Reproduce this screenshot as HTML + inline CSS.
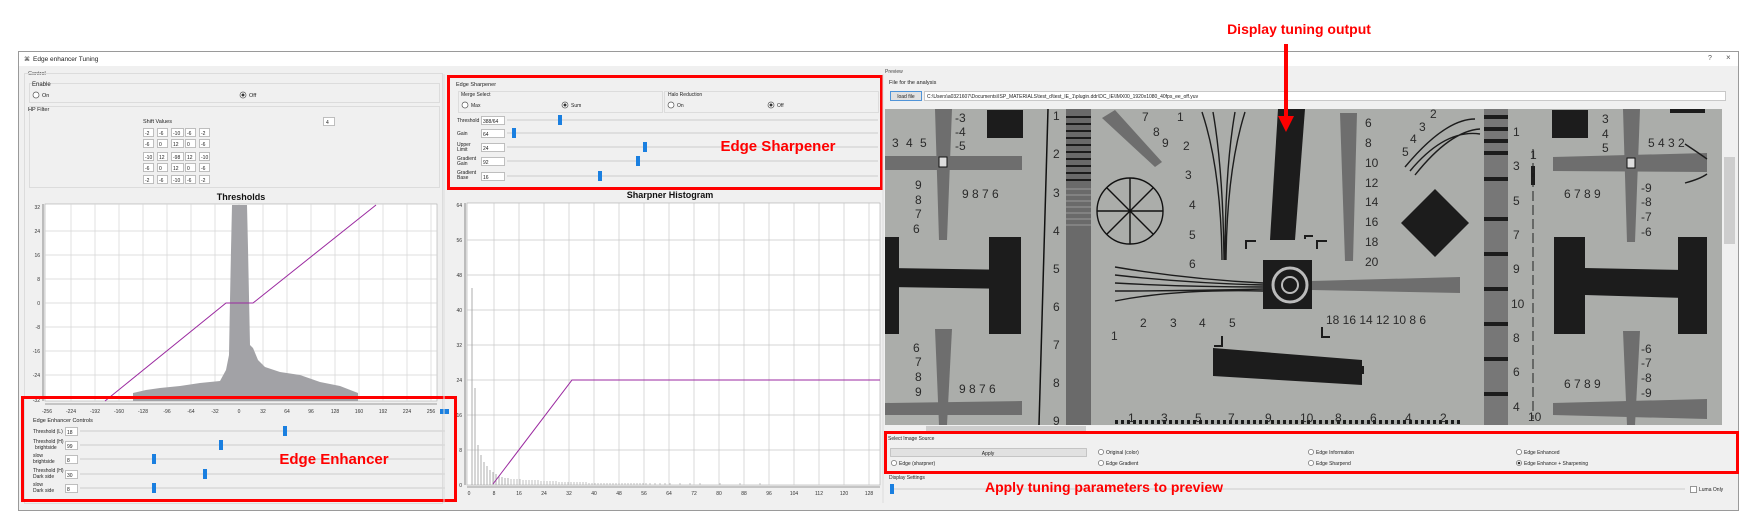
<!DOCTYPE html>
<html><head><meta charset="utf-8"><style>
html,body{margin:0;padding:0;background:#fff;}
svg{display:block;font-family:"Liberation Sans",sans-serif;}
</style></head><body>
<svg width="1758" height="527" viewBox="0 0 1758 527" xmlns="http://www.w3.org/2000/svg">
<rect width="1758" height="527" fill="#fff"/>
<!-- window -->
<rect x="18.5" y="51.5" width="1720" height="459" fill="#f0f0f0" stroke="#9a9a9a"/>
<rect x="19" y="52" width="1719" height="14" fill="#fff"/>
<text x="24" y="61" font-size="6" fill="#333">⌘</text>
<text x="33" y="61" font-size="6.5" fill="#222">Edge enhancer Tuning</text>
<text x="1708" y="60" font-size="7" fill="#555">?</text>
<text x="1726" y="60" font-size="8" fill="#555">×</text>

<!-- Control group -->
<text x="28" y="75" font-size="5.5" fill="#444">Control</text>
<rect x="24.5" y="73.5" width="418" height="430" fill="none" stroke="#dcdcdc"/>
<rect x="29.5" y="83.5" width="410" height="19" fill="none" stroke="#dcdcdc"/>
<text x="32" y="86" font-size="6" fill="#222">Enable</text>
<circle cx="36" cy="95" r="3" fill="#fff" stroke="#555" stroke-width="0.7"/>
<text x="42" y="97" font-size="5.5" fill="#222">On</text>
<circle cx="243" cy="95" r="3" fill="#fff" stroke="#555" stroke-width="0.7"/><circle cx="243" cy="95" r="1.5" fill="#333"/>
<text x="249" y="97" font-size="5.5" fill="#222">Off</text>
<rect x="29.5" y="106.5" width="410" height="81" fill="none" stroke="#dcdcdc"/>
<text x="28" y="111" font-size="5.5" fill="#222">HP Filter</text>
<text x="143" y="123" font-size="5.5" fill="#222">Shift Values</text>
<rect x="323.5" y="117.5" width="11" height="8" fill="#fff" stroke="#999" stroke-width="0.6"/>
<text x="326" y="124" font-size="5" fill="#222">4</text>
<g font-size="5" fill="#222">
<g stroke="#999" stroke-width="0.6" fill="#fff">
<rect x="143.5" y="128.5" width="10" height="8"/><rect x="157.5" y="128.5" width="10" height="8"/><rect x="171.5" y="128.5" width="12" height="8"/><rect x="185.5" y="128.5" width="10" height="8"/><rect x="199.5" y="128.5" width="10" height="8"/>
<rect x="143.5" y="139.5" width="10" height="8"/><rect x="157.5" y="139.5" width="10" height="8"/><rect x="171.5" y="139.5" width="12" height="8"/><rect x="185.5" y="139.5" width="10" height="8"/><rect x="199.5" y="139.5" width="10" height="8"/>
<rect x="143.5" y="152.5" width="10" height="8"/><rect x="157.5" y="152.5" width="10" height="8"/><rect x="171.5" y="152.5" width="12" height="8"/><rect x="185.5" y="152.5" width="10" height="8"/><rect x="199.5" y="152.5" width="10" height="8"/>
<rect x="143.5" y="163.5" width="10" height="8"/><rect x="157.5" y="163.5" width="10" height="8"/><rect x="171.5" y="163.5" width="12" height="8"/><rect x="185.5" y="163.5" width="10" height="8"/><rect x="199.5" y="163.5" width="10" height="8"/>
<rect x="143.5" y="175.5" width="10" height="8"/><rect x="157.5" y="175.5" width="10" height="8"/><rect x="171.5" y="175.5" width="12" height="8"/><rect x="185.5" y="175.5" width="10" height="8"/><rect x="199.5" y="175.5" width="10" height="8"/>
</g>
<text x="145" y="135">-2</text><text x="159" y="135">-6</text><text x="173" y="135">-10</text><text x="187" y="135">-6</text><text x="201" y="135">-2</text>
<text x="145" y="146">-6</text><text x="159" y="146">0</text><text x="173" y="146">12</text><text x="187" y="146">0</text><text x="201" y="146">-6</text>
<text x="145" y="159">-10</text><text x="159" y="159">12</text><text x="173" y="159">-98</text><text x="187" y="159">12</text><text x="201" y="159">-10</text>
<text x="145" y="170">-6</text><text x="159" y="170">0</text><text x="173" y="170">12</text><text x="187" y="170">0</text><text x="201" y="170">-6</text>
<text x="145" y="182">-2</text><text x="159" y="182">-6</text><text x="173" y="182">-10</text><text x="187" y="182">-6</text><text x="201" y="182">-2</text>
</g>

<!-- Thresholds chart -->
<text x="241" y="200" font-size="9" font-weight="bold" text-anchor="middle" fill="#111">Thresholds</text>
<rect x="45" y="204" width="392" height="197" fill="#fff" stroke="#aaa" stroke-width="0.6"/>
<g stroke="#d4d4d4" stroke-width="0.7">
<line x1="71" y1="204" x2="71" y2="401"/><line x1="95" y1="204" x2="95" y2="401"/><line x1="119" y1="204" x2="119" y2="401"/><line x1="143" y1="204" x2="143" y2="401"/><line x1="167" y1="204" x2="167" y2="401"/><line x1="191" y1="204" x2="191" y2="401"/><line x1="215" y1="204" x2="215" y2="401"/><line x1="239" y1="204" x2="239" y2="401"/><line x1="263" y1="204" x2="263" y2="401"/><line x1="287" y1="204" x2="287" y2="401"/><line x1="311" y1="204" x2="311" y2="401"/><line x1="335" y1="204" x2="335" y2="401"/><line x1="359" y1="204" x2="359" y2="401"/><line x1="383" y1="204" x2="383" y2="401"/><line x1="407" y1="204" x2="407" y2="401"/><line x1="431" y1="204" x2="431" y2="401"/>
<line x1="45" y1="231" x2="437" y2="231"/><line x1="45" y1="255" x2="437" y2="255"/><line x1="45" y1="279" x2="437" y2="279"/><line x1="45" y1="303" x2="437" y2="303"/><line x1="45" y1="327" x2="437" y2="327"/><line x1="45" y1="351" x2="437" y2="351"/><line x1="45" y1="375" x2="437" y2="375"/>
</g>
<polygon fill="#a2a2a6" points="133,401 133,393 146,390 160,388 180,386 200,383 220,381 226,370 229,355 230,300 231,250 232,205 247,205 248,248 250,345 253,348 258,360 265,367 280,372 300,375 320,382 340,386 358,393 358,401"/>
<polyline fill="none" stroke="#9b2aa0" stroke-width="1" points="105,401 226,303 253,303 376,205"/>
<g font-size="5" fill="#333" text-anchor="end">
<text x="40" y="209">32</text><text x="40" y="233">24</text><text x="40" y="257">16</text><text x="40" y="281">8</text><text x="40" y="305">0</text><text x="40" y="329">-8</text><text x="40" y="353">-16</text><text x="40" y="377">-24</text><text x="40" y="402">-32</text>
</g>
<line x1="43" y1="204" x2="43" y2="401" stroke="#444" stroke-width="0.6"/>
<line x1="45" y1="404" x2="437" y2="404" stroke="#444" stroke-width="0.6"/>
<g font-size="5" fill="#333" text-anchor="middle">
<text x="47" y="413">-256</text><text x="71" y="413">-224</text><text x="95" y="413">-192</text><text x="119" y="413">-160</text><text x="143" y="413">-128</text><text x="167" y="413">-96</text><text x="191" y="413">-64</text><text x="215" y="413">-32</text><text x="239" y="413">0</text><text x="263" y="413">32</text><text x="287" y="413">64</text><text x="311" y="413">96</text><text x="335" y="413">128</text><text x="359" y="413">160</text><text x="383" y="413">192</text><text x="407" y="413">224</text><text x="431" y="413">256</text>
</g>
<rect x="440" y="409" width="9" height="5" fill="#1a7fe0"/>

<!-- Edge enhancer controls -->
<text x="33" y="422" font-size="5.5" fill="#222">Edge Enhancer Controls</text>
<g font-size="5" fill="#222">
<text x="33" y="433">Threshold (L)</text>
<text x="33" y="443">Threshold (H)</text><text x="35" y="449">brightside</text>
<text x="33" y="457">slow</text><text x="33" y="463">brightside</text>
<text x="33" y="472">Threshold (H)</text><text x="33" y="478">Dark side</text>
<text x="33" y="486">slow</text><text x="33" y="492">Dark side</text>
</g>
<g fill="#fff" stroke="#999" stroke-width="0.6">
<rect x="65.5" y="427.5" width="12" height="8"/><rect x="65.5" y="441.5" width="12" height="8"/><rect x="65.5" y="455.5" width="12" height="8"/><rect x="65.5" y="470.5" width="12" height="8"/><rect x="65.5" y="484.5" width="12" height="8"/>
</g>
<g font-size="5" fill="#222"><text x="67" y="434">18</text><text x="67" y="448">99</text><text x="67" y="462">8</text><text x="67" y="477">30</text><text x="67" y="491">8</text></g>
<g stroke="#d8d8d8" stroke-width="1.5">
<line x1="80" y1="431" x2="445" y2="431"/><line x1="80" y1="445" x2="445" y2="445"/><line x1="80" y1="459" x2="445" y2="459"/><line x1="80" y1="474" x2="445" y2="474"/><line x1="80" y1="488" x2="445" y2="488"/>
</g>
<g fill="#1a7fe0">
<rect x="283" y="426" width="4" height="10"/><rect x="219" y="440" width="4" height="10"/><rect x="152" y="454" width="4" height="10"/><rect x="203" y="469" width="4" height="10"/><rect x="152" y="483" width="4" height="10"/>
</g>
<rect x="22.5" y="397.5" width="433" height="103" fill="none" stroke="#f00" stroke-width="3"/>
<text x="334" y="464" font-size="15" font-weight="bold" fill="#f00" text-anchor="middle">Edge Enhancer</text>

<!-- middle panel -->
<line x1="444" y1="74" x2="444" y2="503" stroke="#dcdcdc"/>
<text x="456" y="86" font-size="5.5" fill="#222">Edge Sharpener</text>
<rect x="458.5" y="91.5" width="204" height="21" fill="none" stroke="#dcdcdc"/>
<text x="461" y="96" font-size="5" fill="#222">Merge Select</text>
<circle cx="465" cy="105" r="3" fill="#fff" stroke="#555" stroke-width="0.7"/><text x="471" y="107" font-size="5" fill="#222">Max</text>
<circle cx="565" cy="105" r="3" fill="#fff" stroke="#555" stroke-width="0.7"/><circle cx="565" cy="105" r="1.5" fill="#333"/><text x="571" y="107" font-size="5" fill="#222">Sum</text>
<rect x="664.5" y="91.5" width="214" height="21" fill="none" stroke="#dcdcdc"/>
<text x="668" y="96" font-size="5" fill="#222">Halo Reduction</text>
<circle cx="671" cy="105" r="3" fill="#fff" stroke="#555" stroke-width="0.7"/><text x="677" y="107" font-size="5" fill="#222">On</text>
<circle cx="771" cy="105" r="3" fill="#fff" stroke="#555" stroke-width="0.7"/><circle cx="771" cy="105" r="1.5" fill="#333"/><text x="777" y="107" font-size="5" fill="#222">Off</text>
<g font-size="5" fill="#222">
<text x="457" y="122">Threshold</text>
<text x="457" y="135">Gain</text>
<text x="457" y="146">Upper</text><text x="457" y="151">Limit</text>
<text x="457" y="160">Gradient</text><text x="457" y="165">Gain</text>
<text x="457" y="174">Gradient</text><text x="457" y="179">Base</text>
</g>
<g fill="#fff" stroke="#999" stroke-width="0.6">
<rect x="481.5" y="116.5" width="23" height="8"/><rect x="481.5" y="129.5" width="23" height="8"/><rect x="481.5" y="143.5" width="23" height="8"/><rect x="481.5" y="157.5" width="23" height="8"/><rect x="481.5" y="172.5" width="23" height="8"/>
</g>
<g font-size="5" fill="#222"><text x="483" y="123">388/64</text><text x="483" y="136">64</text><text x="483" y="150">24</text><text x="483" y="164">92</text><text x="483" y="179">16</text></g>
<g stroke="#d8d8d8" stroke-width="1.5">
<line x1="507" y1="120" x2="878" y2="120"/><line x1="507" y1="133" x2="878" y2="133"/><line x1="507" y1="147" x2="878" y2="147"/><line x1="507" y1="161" x2="878" y2="161"/><line x1="507" y1="176" x2="878" y2="176"/>
</g>
<g fill="#1a7fe0">
<rect x="558" y="115" width="4" height="10"/><rect x="512" y="128" width="4" height="10"/><rect x="643" y="142" width="4" height="10"/><rect x="636" y="156" width="4" height="10"/><rect x="598" y="171" width="4" height="10"/>
</g>
<rect x="448.5" y="76.5" width="433" height="112" fill="none" stroke="#f00" stroke-width="3"/>
<text x="778" y="151" font-size="15" font-weight="bold" fill="#f00" text-anchor="middle">Edge Sharpener</text>

<!-- Sharpner histogram -->
<text x="670" y="198" font-size="9" font-weight="bold" text-anchor="middle" fill="#111">Sharpner Histogram</text>
<rect x="467" y="203" width="413" height="282" fill="#fff" stroke="#aaa" stroke-width="0.6"/>
<g stroke="#c8c8c8" stroke-width="0.7">
<line x1="494" y1="203" x2="494" y2="485"/><line x1="519" y1="203" x2="519" y2="485"/><line x1="544" y1="203" x2="544" y2="485"/><line x1="569" y1="203" x2="569" y2="485"/><line x1="594" y1="203" x2="594" y2="485"/><line x1="619" y1="203" x2="619" y2="485"/><line x1="644" y1="203" x2="644" y2="485"/><line x1="669" y1="203" x2="669" y2="485"/><line x1="694" y1="203" x2="694" y2="485"/><line x1="719" y1="203" x2="719" y2="485"/><line x1="744" y1="203" x2="744" y2="485"/><line x1="769" y1="203" x2="769" y2="485"/><line x1="794" y1="203" x2="794" y2="485"/><line x1="819" y1="203" x2="819" y2="485"/><line x1="844" y1="203" x2="844" y2="485"/><line x1="869" y1="203" x2="869" y2="485"/>
<line x1="467" y1="240" x2="880" y2="240"/><line x1="467" y1="275" x2="880" y2="275"/><line x1="467" y1="310" x2="880" y2="310"/><line x1="467" y1="345" x2="880" y2="345"/><line x1="467" y1="380" x2="880" y2="380"/><line x1="467" y1="415" x2="880" y2="415"/><line x1="467" y1="450" x2="880" y2="450"/>
</g>
<g stroke="#9a9a9a" stroke-width="0.8">
<line x1="472" y1="485" x2="472" y2="288"/><line x1="475" y1="485" x2="475" y2="388"/><line x1="478" y1="485" x2="478" y2="445"/><line x1="481" y1="485" x2="481" y2="455"/><line x1="484" y1="485" x2="484" y2="462"/><line x1="487" y1="485" x2="487" y2="466"/><line x1="490" y1="485" x2="490" y2="470"/><line x1="493" y1="485" x2="493" y2="472"/><line x1="496" y1="485" x2="496" y2="474"/><line x1="499" y1="485" x2="499" y2="476"/><line x1="502" y1="485" x2="502" y2="477"/><line x1="505" y1="485" x2="505" y2="478"/><line x1="508" y1="485" x2="508" y2="478"/>
</g>
<path d="M511 485v-6M514 485v-6M517 485v-6M520 485v-6M523 485v-5M526 485v-5M529 485v-5M532 485v-5M535 485v-5M538 485v-5M541 485v-4M544 485v-4M547 485v-4M550 485v-4M553 485v-4M556 485v-4M559 485v-3M562 485v-3M565 485v-3M568 485v-3M571 485v-3M574 485v-3M577 485v-3M580 485v-3M583 485v-3M586 485v-3M589 485v-2M592 485v-2M595 485v-2M598 485v-2M601 485v-2M604 485v-2M607 485v-2M610 485v-2M613 485v-2M616 485v-2M619 485v-2M622 485v-2M625 485v-2M628 485v-2M631 485v-2M634 485v-2M637 485v-2M640 485v-2M643 485v-2M646 485v-2M650 485v-2M655 485v-2M660 485v-2M665 485v-2M670 485v-2M680 485v-2M690 485v-2M700 485v-2M720 485v-2M740 485v-2M760 485v-2" stroke="#b0b0b0" stroke-width="0.8"/>
<polyline fill="none" stroke="#9b2aa0" stroke-width="1" points="493,484 572,380 880,380"/>
<line x1="465" y1="203" x2="465" y2="485" stroke="#444" stroke-width="0.6"/>
<line x1="467" y1="487" x2="880" y2="487" stroke="#444" stroke-width="0.6"/>
<g font-size="5" fill="#333" text-anchor="end">
<text x="462" y="207">64</text><text x="462" y="242">56</text><text x="462" y="277">48</text><text x="462" y="312">40</text><text x="462" y="347">32</text><text x="462" y="382">24</text><text x="462" y="417">16</text><text x="462" y="452">8</text><text x="462" y="487">0</text>
</g>
<g font-size="5" fill="#333" text-anchor="middle">
<text x="469" y="495">0</text><text x="494" y="495">8</text><text x="519" y="495">16</text><text x="544" y="495">24</text><text x="569" y="495">32</text><text x="594" y="495">40</text><text x="619" y="495">48</text><text x="644" y="495">56</text><text x="669" y="495">64</text><text x="694" y="495">72</text><text x="719" y="495">80</text><text x="744" y="495">88</text><text x="769" y="495">96</text><text x="794" y="495">104</text><text x="819" y="495">112</text><text x="844" y="495">120</text><text x="869" y="495">128</text>
</g>

<!-- Preview panel -->
<line x1="883" y1="74" x2="883" y2="503" stroke="#dcdcdc"/>
<text x="885" y="73" font-size="5" fill="#444">Preview</text>
<text x="889" y="84" font-size="5.5" fill="#222">File for the analysis</text>
<rect x="890.5" y="91.5" width="31" height="9" fill="#e1e1e1" stroke="#2a7fd4" stroke-width="0.8"/>
<text x="906" y="98" font-size="5" fill="#222" text-anchor="middle">load file</text>
<rect x="924.5" y="91.5" width="801" height="9" fill="#fff" stroke="#aaa" stroke-width="0.6"/>
<text x="927" y="98" font-size="5" fill="#222">C:\Users\a0321607\Documents\ISP_MATERIALS\test_d\test_IE_1\plugin.ddr\DC_IE\IMX00_1920x1080_40fps_ee_off.yuv</text>

<!-- test chart image -->
<svg x="885" y="109" width="837" height="316" viewBox="0 0 837 316">
<rect width="837" height="316" fill="#abadaa"/>
<g fill="#1c1c1c">
<!-- left column -->
<rect x="102" y="1" width="36" height="28"/>
<rect x="0" y="128" width="14" height="97"/>
<polygon points="0,159 135,161 135,180 0,178"/>
<rect x="104" y="128" width="32" height="97"/>
<!-- tall bar -->
<polygon points="393,0 420,0 410,131 385,131"/>
<!-- target -->
<rect x="378" y="151" width="49" height="49"/>
<!-- bottom bar -->
<polygon points="328,239 477,251 477,276 328,267"/>
<!-- diamond -->
<polygon points="550,80 584,114 550,148 516,114"/>
<!-- right column -->
<rect x="667" y="1" width="36" height="28"/>
<rect x="785" y="0" width="35" height="4"/>
<rect x="669" y="128" width="31" height="97"/>
<polygon points="700,159 800,161 800,189 700,186"/>
<rect x="793" y="128" width="29" height="97"/>
<rect x="646" y="57" width="4" height="19"/>
</g>
<!-- fans vertical -->
<g fill="#6e6e6e">
<polygon points="50,0 67,0 62,131 54,131"/>
<polygon points="50,220 67,220 62,316 54,316"/>
<polygon points="738,0 755,0 750,133 742,133"/>
<polygon points="738,222 755,222 750,316 742,316"/>
<polygon points="0,47 137,47 137,61 0,61"/>
<polygon points="0,294 137,292 137,306 0,306"/>
<polygon points="668,48 822,44 822,63 668,62"/>
<polygon points="668,294 822,290 822,310 668,306"/>
<polygon points="427,172 575,168 575,184 427,181"/>
<polygon points="455,4 472,4 468,152 460,152"/>
<polygon points="217,9 230,1 277,53 270,58"/>
</g>
<g fill="none" stroke="#1c1c1c" stroke-width="1.4">
<path d="M317 3 Q336 60 337 151 M328 3 Q338 60 339 151 M350 3 Q340 60 340 151 M360 3 Q342 60 341 151"/>
<path d="M230 158 Q300 170 378 174 M230 166 Q300 174 378 176 M230 174 Q300 178 378 178 M230 182 Q300 182 378 180 M230 192 Q290 180 378 182"/>
<path d="M525 62 Q560 20 595 25 M530 66 Q565 22 595 20 M520 58 Q560 10 590 10"/>
<path d="M800 35 Q815 45 822 50 M800 74 Q815 70 822 65"/>
</g>
<rect x="54" y="48" width="8" height="10" fill="#ddd" stroke="#111"/>
<rect x="742" y="49" width="8" height="10" fill="#ddd" stroke="#111"/>
<circle cx="405" cy="176" r="17" fill="none" stroke="#bbb" stroke-width="3"/><circle cx="405" cy="176" r="8" fill="none" stroke="#bbb" stroke-width="2"/>
<!-- wheel -->
<g transform="translate(245,102)" stroke="#111" stroke-width="1.4" fill="none">
<circle r="33"/><line x1="-33" y1="0" x2="33" y2="0"/><line x1="0" y1="-33" x2="0" y2="33"/><line x1="-23" y1="-23" x2="23" y2="23"/><line x1="-23" y1="23" x2="23" y2="-23"/>
</g>
<!-- vertical line -->
<line x1="163" y1="0" x2="154" y2="316" stroke="#111" stroke-width="1.5"/>
<line x1="648" y1="40" x2="648" y2="310" stroke="#222" stroke-width="1" stroke-dasharray="10,4"/>
<!-- ladders -->
<rect x="181" y="0" width="25" height="316" fill="#6a6a6a"/>
<g stroke="#1c1c1c" stroke-width="2"><path d="M181 8h25M181 15h25M181 22h25M181 29h25M181 36h25M181 43h25M181 50h25M181 57h25M181 64h25M181 71h25"/></g>
<g stroke="#9a9a9a" stroke-width="1"><path d="M181 80h25M181 86h25M181 92h25M181 98h25M181 104h25M181 110h25M181 116h25"/></g>
<rect x="599" y="0" width="24" height="316" fill="#777"/>
<g stroke="#1c1c1c" stroke-width="4"><path d="M599 8h24M599 20h24M599 32h24M599 44h24M599 70h24M599 110h24M599 145h24M599 180h24M599 215h24M599 250h24M599 285h24"/></g>
<!-- bottom dash strip -->
<g stroke="#1c1c1c" stroke-width="4" stroke-dasharray="3,3"><line x1="230" y1="313" x2="575" y2="313"/></g>
<!-- numbers -->
<g font-size="12" fill="#2a2a2a">
<text x="70" y="13">-3</text><text x="70" y="27">-4</text><text x="70" y="41">-5</text>
<text x="7" y="38">3</text><text x="21" y="38">4</text><text x="35" y="38">5</text>
<text x="77" y="89">9 8 7 6</text>
<text x="30" y="80">9</text><text x="30" y="95">8</text><text x="30" y="109">7</text><text x="28" y="124">6</text>
<text x="28" y="243">6</text><text x="30" y="257">7</text><text x="30" y="272">8</text><text x="30" y="287">9</text>
<text x="74" y="284">9 8 7 6</text>
<text x="168" y="11">1</text><text x="168" y="49">2</text><text x="168" y="88">3</text><text x="168" y="126">4</text><text x="168" y="164">5</text><text x="168" y="202">6</text><text x="168" y="240">7</text><text x="168" y="278">8</text><text x="168" y="316">9</text>
<text x="257" y="12">7</text><text x="268" y="27">8</text><text x="277" y="38">9</text>
<text x="292" y="12">1</text><text x="298" y="41">2</text><text x="300" y="70">3</text><text x="304" y="100">4</text><text x="304" y="130">5</text><text x="304" y="159">6</text>
<text x="255" y="218">2</text><text x="285" y="218">3</text><text x="314" y="218">4</text><text x="344" y="218">5</text><text x="226" y="231">1</text>
<text x="480" y="18">6</text><text x="480" y="38">8</text><text x="480" y="58">10</text><text x="480" y="78">12</text><text x="480" y="97">14</text><text x="480" y="117">16</text><text x="480" y="137">18</text><text x="480" y="157">20</text>
<text x="441" y="215">18 16 14 12 10 8 6</text>
<text x="545" y="9">2</text><text x="534" y="22">3</text><text x="525" y="34">4</text><text x="517" y="47">5</text>
<text x="243" y="313">1</text><text x="276" y="313">3</text><text x="310" y="313">5</text><text x="343" y="313">7</text><text x="380" y="313">9</text><text x="415" y="313">10</text><text x="450" y="313">8</text><text x="485" y="313">6</text><text x="520" y="313">4</text><text x="555" y="313">2</text>
<text x="628" y="27">1</text><text x="628" y="61">3</text><text x="628" y="96">5</text><text x="628" y="130">7</text><text x="628" y="164">9</text><text x="626" y="199">10</text><text x="628" y="233">8</text><text x="628" y="267">6</text><text x="628" y="302">4</text>
<text x="645" y="50">1</text><text x="643" y="312">10</text>
<text x="717" y="14">3</text><text x="717" y="29">4</text><text x="717" y="43">5</text>
<text x="763" y="38">5 4 3 2</text>
<text x="679" y="89">6 7 8 9</text>
<text x="756" y="83">-9</text><text x="756" y="97">-8</text><text x="756" y="112">-7</text><text x="756" y="127">-6</text>
<text x="756" y="244">-6</text><text x="756" y="258">-7</text><text x="756" y="273">-8</text><text x="756" y="288">-9</text>
<text x="679" y="279">6 7 8 9</text>
</g>
<g fill="none" stroke="#1c1c1c" stroke-width="2">
<path d="M361 140v-8h10M420 130v-3h8M432 140v-8h10M437 218v10h8M337 227v10h-8M478 265v-8"/>
</g>
</svg>
<!-- scrollbars -->
<rect x="1722" y="109" width="15" height="317" fill="#f0f0f0"/>
<rect x="1724" y="157" width="11" height="87" fill="#cdcdcd"/>
<rect x="885" y="425" width="837" height="7" fill="#f0f0f0"/>
<rect x="926" y="426" width="160" height="5" fill="#cdcdcd"/>

<!-- Select image source -->
<text x="888" y="440" font-size="5" fill="#222">Select Image Source</text>
<rect x="890.5" y="448.5" width="196" height="8" fill="#e1e1e1" stroke="#adadad" stroke-width="0.6"/>
<text x="988" y="455" font-size="5" fill="#222" text-anchor="middle">Apply</text>
<g font-size="5" fill="#222">
<circle cx="1101" cy="452" r="2.6" fill="#fff" stroke="#555" stroke-width="0.6"/><text x="1106" y="454">Original (color)</text>
<circle cx="1311" cy="452" r="2.6" fill="#fff" stroke="#555" stroke-width="0.6"/><text x="1316" y="454">Edge Information</text>
<circle cx="1519" cy="452" r="2.6" fill="#fff" stroke="#555" stroke-width="0.6"/><text x="1524" y="454">Edge Enhanced</text>
<circle cx="894" cy="463" r="2.6" fill="#fff" stroke="#555" stroke-width="0.6"/><text x="899" y="465">Edge (sharpner)</text>
<circle cx="1101" cy="463" r="2.6" fill="#fff" stroke="#555" stroke-width="0.6"/><text x="1106" y="465">Edge Gradient</text>
<circle cx="1311" cy="463" r="2.6" fill="#fff" stroke="#555" stroke-width="0.6"/><text x="1316" y="465">Edge Sharpend</text>
<circle cx="1519" cy="463" r="2.6" fill="#fff" stroke="#555" stroke-width="0.6"/><circle cx="1519" cy="463" r="1.3" fill="#333"/><text x="1524" y="465">Edge Enhance + Sharpening</text>
</g>
<rect x="885.5" y="432.5" width="852" height="40" fill="none" stroke="#f00" stroke-width="3"/>
<text x="889" y="479" font-size="5" fill="#222">Display Settings</text>
<line x1="890" y1="489" x2="1685" y2="489" stroke="#d8d8d8" stroke-width="1.5"/>
<rect x="890" y="484" width="4" height="10" fill="#1a7fe0"/>
<rect x="1690.5" y="486.5" width="6" height="6" fill="#fff" stroke="#555" stroke-width="0.6"/>
<text x="1699" y="491" font-size="5" fill="#222">Luma Only</text>
<text x="1104" y="492" font-size="14" font-weight="bold" fill="#f00" text-anchor="middle">Apply tuning parameters to preview</text>

<!-- annotation top -->
<text x="1299" y="34" font-size="14" font-weight="bold" fill="#f00" text-anchor="middle">Display tuning output</text>
<rect x="1284" y="44" width="4" height="76" fill="#f00"/>
<polygon points="1278,116 1294,116 1286,132" fill="#f00"/>
</svg>
</body></html>
